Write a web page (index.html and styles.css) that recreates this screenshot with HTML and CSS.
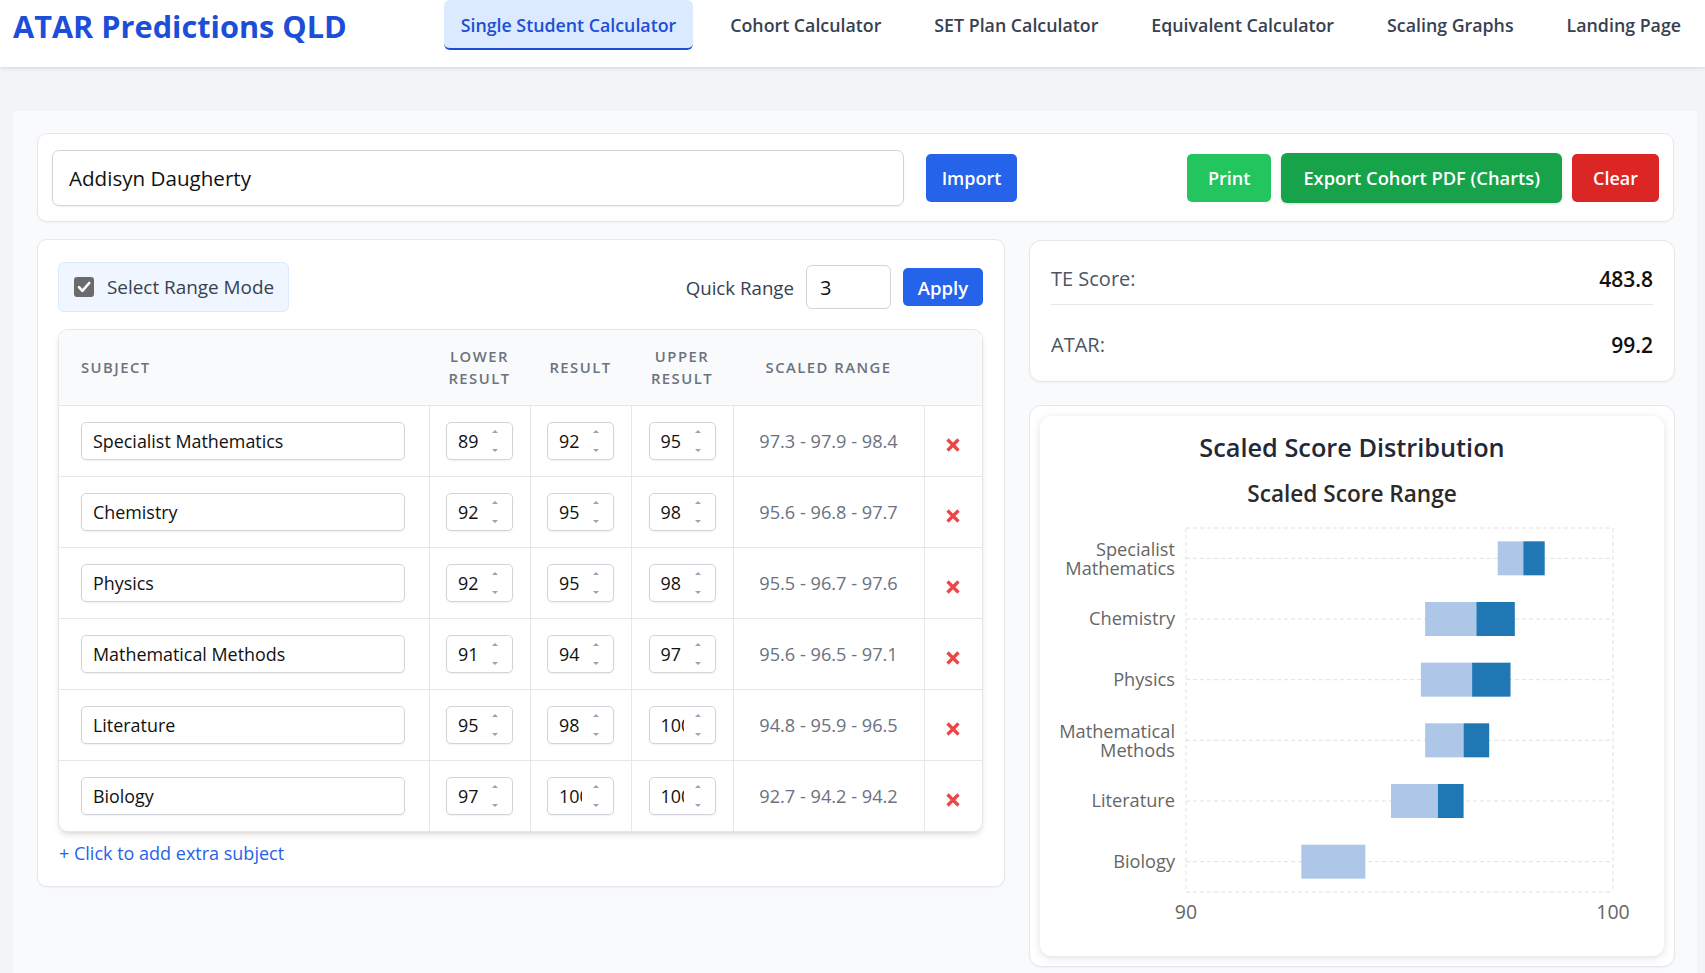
FILE: index.html
```html
<!DOCTYPE html>
<html lang="en">
<head>
<meta charset="utf-8">
<title>ATAR Predictions QLD</title>
<link rel="stylesheet" href="styles.css">
</head>
<body>
<header class="topbar">
  <h1 class="brand">ATAR Predictions QLD</h1>
  <nav class="nav">
    <a class="nav-item active">Single Student Calculator</a>
    <a class="nav-item">Cohort Calculator</a>
    <a class="nav-item">SET Plan Calculator</a>
    <a class="nav-item">Equivalent Calculator</a>
    <a class="nav-item">Scaling Graphs</a>
    <a class="nav-item">Landing Page</a>
  </nav>
</header>

<main class="page">
  <section class="card student-bar">
    <input class="name-input" type="text" value="Addisyn Daugherty">
    <button class="btn btn-blue btn-import">Import</button>
    <div class="actions">
      <button class="btn btn-green">Print</button>
      <button class="btn btn-dkgreen">Export Cohort PDF (Charts)</button>
      <button class="btn btn-red">Clear</button>
    </div>
  </section>

  <div class="layout">
    <section class="card subjects">
      <div class="toolbar">
        <label class="range-mode">
          <span class="check"><svg width="20" height="20" viewBox="0 0 20 20"><path d="M5 10.2l3.4 3.6L15.2 6" fill="none" stroke="#fff" stroke-width="2.6" stroke-linecap="round" stroke-linejoin="round"/></svg></span>
          Select Range Mode
        </label>
        <div class="quick">
          <span class="quick-label">Quick Range</span>
          <input class="quick-input" type="text" value="3">
          <button class="btn btn-blue btn-apply">Apply</button>
        </div>
      </div>

      <div class="table-wrap">
        <table class="subject-table">
          <colgroup>
            <col class="c-subject"><col class="c-num"><col class="c-num"><col class="c-num2"><col class="c-scaled"><col class="c-del">
          </colgroup>
          <thead>
            <tr>
              <th class="th-subject">Subject</th>
              <th>Lower<br>Result</th>
              <th>Result</th>
              <th>Upper<br>Result</th>
              <th>Scaled Range</th>
              <th></th>
            </tr>
          </thead>
          <tbody>
            <tr>
              <td class="td-subject"><input class="subject-input" type="text" value="Specialist Mathematics"></td>
              <td><span class="num-wrap"><input class="num" type="number" value="89"></span></td>
              <td><span class="num-wrap"><input class="num" type="number" value="92"></span></td>
              <td><span class="num-wrap"><input class="num" type="number" value="95"></span></td>
              <td class="scaled">97.3 - 97.9 - 98.4</td>
              <td class="del"><svg width="14" height="14" viewBox="0 0 14 14"><path d="M1.5 1.5L12.5 12.5M12.5 1.5L1.5 12.5" stroke="#ef4444" stroke-width="3.2"/></svg></td>
            </tr>
            <tr>
              <td class="td-subject"><input class="subject-input" type="text" value="Chemistry"></td>
              <td><span class="num-wrap"><input class="num" type="number" value="92"></span></td>
              <td><span class="num-wrap"><input class="num" type="number" value="95"></span></td>
              <td><span class="num-wrap"><input class="num" type="number" value="98"></span></td>
              <td class="scaled">95.6 - 96.8 - 97.7</td>
              <td class="del"><svg width="14" height="14" viewBox="0 0 14 14"><path d="M1.5 1.5L12.5 12.5M12.5 1.5L1.5 12.5" stroke="#ef4444" stroke-width="3.2"/></svg></td>
            </tr>
            <tr>
              <td class="td-subject"><input class="subject-input" type="text" value="Physics"></td>
              <td><span class="num-wrap"><input class="num" type="number" value="92"></span></td>
              <td><span class="num-wrap"><input class="num" type="number" value="95"></span></td>
              <td><span class="num-wrap"><input class="num" type="number" value="98"></span></td>
              <td class="scaled">95.5 - 96.7 - 97.6</td>
              <td class="del"><svg width="14" height="14" viewBox="0 0 14 14"><path d="M1.5 1.5L12.5 12.5M12.5 1.5L1.5 12.5" stroke="#ef4444" stroke-width="3.2"/></svg></td>
            </tr>
            <tr>
              <td class="td-subject"><input class="subject-input" type="text" value="Mathematical Methods"></td>
              <td><span class="num-wrap"><input class="num" type="number" value="91"></span></td>
              <td><span class="num-wrap"><input class="num" type="number" value="94"></span></td>
              <td><span class="num-wrap"><input class="num" type="number" value="97"></span></td>
              <td class="scaled">95.6 - 96.5 - 97.1</td>
              <td class="del"><svg width="14" height="14" viewBox="0 0 14 14"><path d="M1.5 1.5L12.5 12.5M12.5 1.5L1.5 12.5" stroke="#ef4444" stroke-width="3.2"/></svg></td>
            </tr>
            <tr>
              <td class="td-subject"><input class="subject-input" type="text" value="Literature"></td>
              <td><span class="num-wrap"><input class="num" type="number" value="95"></span></td>
              <td><span class="num-wrap"><input class="num" type="number" value="98"></span></td>
              <td><span class="num-wrap"><input class="num" type="number" value="100"></span></td>
              <td class="scaled">94.8 - 95.9 - 96.5</td>
              <td class="del"><svg width="14" height="14" viewBox="0 0 14 14"><path d="M1.5 1.5L12.5 12.5M12.5 1.5L1.5 12.5" stroke="#ef4444" stroke-width="3.2"/></svg></td>
            </tr>
            <tr>
              <td class="td-subject"><input class="subject-input" type="text" value="Biology"></td>
              <td><span class="num-wrap"><input class="num" type="number" value="97"></span></td>
              <td><span class="num-wrap"><input class="num" type="number" value="100"></span></td>
              <td><span class="num-wrap"><input class="num" type="number" value="100"></span></td>
              <td class="scaled">92.7 - 94.2 - 94.2</td>
              <td class="del"><svg width="14" height="14" viewBox="0 0 14 14"><path d="M1.5 1.5L12.5 12.5M12.5 1.5L1.5 12.5" stroke="#ef4444" stroke-width="3.2"/></svg></td>
            </tr>
          </tbody>
        </table>
      </div>
      <a class="add-link">+ Click to add extra subject</a>
    </section>

    <aside class="side">
      <section class="card totals">
        <div class="total-row first">
          <span class="total-label">TE Score:</span>
          <span class="total-value">483.8</span>
        </div>
        <div class="total-row second">
          <span class="total-label">ATAR:</span>
          <span class="total-value">99.2</span>
        </div>
      </section>

      <section class="card chart-card">
        <div class="chart-inner">
          <h3 class="chart-title">Scaled Score Distribution</h3>
          <svg class="chart" width="624" height="492" viewBox="0 0 624 492">
            <text class="chart-sub" x="312" y="30" dy=".35em" text-anchor="middle">Scaled Score Range</text>
            <g class="grid">
              <line x1="146" y1="64" x2="573" y2="64"/>
              <line x1="146" y1="94.33" x2="573" y2="94.33"/>
              <line x1="146" y1="155" x2="573" y2="155"/>
              <line x1="146" y1="215.67" x2="573" y2="215.67"/>
              <line x1="146" y1="276.33" x2="573" y2="276.33"/>
              <line x1="146" y1="337" x2="573" y2="337"/>
              <line x1="146" y1="397.67" x2="573" y2="397.67"/>
              <line x1="146" y1="428" x2="573" y2="428"/>
              <line x1="146" y1="64" x2="146" y2="428"/>
              <line x1="573" y1="64" x2="573" y2="428"/>
            </g>
            <g class="bars-light">
              <rect x="457.7" y="77.33" width="25.6" height="34"/>
              <rect x="385.1" y="138" width="51.3" height="34"/>
              <rect x="380.9" y="198.67" width="51.2" height="34"/>
              <rect x="385.1" y="259.33" width="38.5" height="34"/>
              <rect x="351" y="320" width="46.9" height="34"/>
              <rect x="261.3" y="380.67" width="64" height="34"/>
            </g>
            <g class="bars-dark">
              <rect x="483.3" y="77.33" width="21.4" height="34"/>
              <rect x="436.4" y="138" width="38.4" height="34"/>
              <rect x="432.1" y="198.67" width="38.4" height="34"/>
              <rect x="423.6" y="259.33" width="25.6" height="34"/>
              <rect x="397.9" y="320" width="25.7" height="34"/>
            </g>
            <g class="ylabels">
              <text x="135" y="85.8" dy=".35em" text-anchor="end">Specialist</text>
              <text x="135" y="105" dy=".35em" text-anchor="end">Mathematics</text>
              <text x="135" y="155" dy=".35em" text-anchor="end">Chemistry</text>
              <text x="135" y="215.67" dy=".35em" text-anchor="end">Physics</text>
              <text x="135" y="267.5" dy=".35em" text-anchor="end">Mathematical</text>
              <text x="135" y="286.8" dy=".35em" text-anchor="end">Methods</text>
              <text x="135" y="337" dy=".35em" text-anchor="end">Literature</text>
              <text x="135" y="397.67" dy=".35em" text-anchor="end">Biology</text>
            </g>
            <g class="xlabels">
              <text x="146" y="448" dy=".35em" text-anchor="middle">90</text>
              <text x="573" y="448" dy=".35em" text-anchor="middle">100</text>
            </g>
          </svg>
        </div>
      </section>
    </aside>
  </div>
</main>
</body>
</html>
```

FILE: styles.css
```css
* { box-sizing: border-box; }

html, body {
  margin: 0;
  padding: 0;
}

body {
  background: #f3f4f6;
  font-family: "Open Sans", "Noto Sans", "Liberation Sans", sans-serif;
  color: #111827;
  min-height: 973px;
}

/* ---------- header ---------- */
.topbar {
  height: 67px;
  background: #ffffff;
  display: flex;
  justify-content: space-between;
  align-items: flex-start;
  padding: 0 8px 0 13px;
  box-shadow: 0 1px 3px rgba(0, 0, 0, 0.08), 0 2px 4px rgba(0, 0, 0, 0.04);
  position: relative;
  z-index: 1;
}

.brand {
  margin: 0;
  font-size: 30.7px;
  line-height: 53px;
  font-weight: 700;
  color: #1d4ed8;
}

.nav {
  display: flex;
  gap: 21px;
}

.nav-item {
  height: 50px;
  display: flex;
  align-items: center;
  padding: 0 16px;
  font-size: 17.8px;
  font-weight: 600;
  color: #374151;
  border-radius: 6px;
  white-space: nowrap;
}

.nav-item.active {
  background: #dbeafe;
  color: #1d4ed8;
  border-bottom: 2px solid #1d4ed8;
  padding: 2px 17px 0;
}

/* ---------- page ---------- */
.page {
  margin: 44px 8px 0 13px;
  background: #f9fafb;
  padding: 22px 23px 0 24px;
  min-height: 862px;
}

.card {
  background: #ffffff;
  border: 1px solid #e5e7eb;
  border-radius: 10px;
  box-shadow: 0 1px 2px rgba(0, 0, 0, 0.04);
}

.student-bar {
  height: 89px;
  display: flex;
  align-items: center;
  padding: 0 14px;
}

.name-input {
  width: 852px;
  height: 56px;
  border: 1px solid #d1d5db;
  border-radius: 7px;
  padding: 0 16px;
  font-family: inherit;
  font-size: 20.6px;
  color: #111;
  box-shadow: 0 1px 2px rgba(0, 0, 0, 0.05);
}

.btn {
  border: none;
  border-radius: 5px;
  color: #ffffff;
  font-family: inherit;
  font-weight: 600;
  font-size: 18px;
  height: 48px;
  padding: 0 21px;
  white-space: nowrap;
}

.btn-blue { background: #2563eb; }
.btn-green { background: #22c55e; }
.btn-dkgreen {
  background: #16a34a;
  height: 50px;
  border-radius: 6px;
  padding: 0 22px;
  font-size: 18.3px;
  box-shadow: 0 1px 3px rgba(0, 0, 0, 0.15);
}
.btn-red { background: #dc2626; }

.btn-import {
  margin-left: 22px;
  padding: 0 15px;
  width: 91px;
}

.actions {
  margin-left: auto;
  display: flex;
  align-items: center;
  gap: 10px;
}

/* ---------- layout ---------- */
.layout {
  margin-top: 17px;
  display: grid;
  grid-template-columns: 3fr 2fr;
  gap: 24px;
  align-items: start;
}

.subjects {
  padding: 22px 21px 20px 20px;
}

.toolbar {
  display: flex;
  justify-content: space-between;
  align-items: center;
}

.range-mode {
  width: 231px;
  height: 50px;
  display: flex;
  align-items: center;
  gap: 13px;
  padding-left: 15px;
  background: #eff6ff;
  border: 1px solid #dbeafe;
  border-radius: 6px;
  font-size: 18.9px;
  font-weight: 500;
  color: #374151;
  white-space: nowrap;
}

.check {
  width: 20px;
  height: 20px;
  flex: none;
  background: #6b6b6b;
  border-radius: 3px;
  display: flex;
}

.quick {
  display: flex;
  align-items: center;
  gap: 12px;
}

.quick-label {
  font-size: 18.7px;
  color: #374151;
}

.quick-input {
  width: 85px;
  height: 44px;
  border: 1px solid #d1d5db;
  border-radius: 6px;
  padding: 0 13px;
  font-family: inherit;
  font-size: 20px;
  color: #111;
}

.btn-apply {
  width: 80px;
  height: 38px;
  padding: 0 12px;
  font-size: 18.5px;
}

/* ---------- table ---------- */
.table-wrap {
  margin-top: 17px;
  border: 1px solid #e5e7eb;
  border-radius: 10px;
  overflow: hidden;
  box-shadow: 0 4px 6px -1px rgba(0, 0, 0, 0.1), 0 2px 4px -1px rgba(0, 0, 0, 0.06);
}

.subject-table {
  width: 100%;
  table-layout: fixed;
  border-collapse: collapse;
}

.c-subject { width: 370px; }
.c-num { width: 101px; }
.c-num2 { width: 102px; }
.c-scaled { width: 191px; }
.c-del { width: 58px; }

.subject-table th {
  height: 75px;
  background: #f9fafb;
  font-size: 14.8px;
  font-weight: 600;
  line-height: 22px;
  letter-spacing: 0.1em;
  text-transform: uppercase;
  color: #6b7280;
  text-align: center;
  vertical-align: middle;
  padding: 0;
}

.subject-table th.th-subject {
  text-align: left;
  padding-left: 22px;
}

.subject-table td {
  height: 71px;
  border-top: 1px solid #e5e7eb;
  border-right: 1px solid #e5e7eb;
  text-align: center;
  vertical-align: middle;
  padding: 0;
}

.subject-table td.del {
  border-right: none;
}

.subject-table td.td-subject {
  text-align: left;
  padding-left: 22px;
}

.subject-input {
  width: 324px;
  height: 38px;
  border: 1px solid #d1d5db;
  border-radius: 5px;
  padding: 0 11px;
  font-family: inherit;
  font-size: 17.9px;
  color: #111;
  box-shadow: 0 1px 2px rgba(0, 0, 0, 0.06);
  vertical-align: middle;
}

.num-wrap {
  position: relative;
  display: inline-block;
  vertical-align: middle;
}

.num-wrap::before,
.num-wrap::after {
  content: "";
  position: absolute;
  right: 15px;
  width: 0;
  height: 0;
  border-left: 3px solid transparent;
  border-right: 3px solid transparent;
  pointer-events: none;
}

.num-wrap::before {
  top: 8px;
  border-bottom: 3.5px solid #9ca3af;
}

.num-wrap::after {
  bottom: 8px;
  border-top: 3.5px solid #9ca3af;
}

.num {
  display: block;
  width: 67px;
  height: 38px;
  border: 1px solid #d1d5db;
  border-radius: 5px;
  padding: 0 31px 0 11px;
  font-family: inherit;
  font-size: 17.9px;
  color: #111;
  box-shadow: 0 1px 2px rgba(0, 0, 0, 0.06);
  -moz-appearance: textfield;
}

.num::-webkit-inner-spin-button,
.num::-webkit-outer-spin-button {
  -webkit-appearance: none;
  margin: 0;
}

.scaled {
  font-size: 18.2px;
  color: #6b7280;
}

.del svg {
  display: inline-block;
  vertical-align: middle;
  margin-top: 5px;
}

.add-link {
  display: block;
  margin-top: 8px;
  margin-left: 1px;
  font-size: 18px;
  line-height: 26px;
  color: #2563eb;
}

/* ---------- side ---------- */
.side {
  display: flex;
  flex-direction: column;
  gap: 23px;
  margin-top: 1px;
}

.totals {
  height: 142px;
  border-radius: 12px;
  padding: 0 21px;
}

.total-row {
  display: flex;
  justify-content: space-between;
  align-items: center;
  line-height: 30px;
}

.total-row.first {
  padding: 23px 0 10px;
  border-bottom: 1px solid #e5e7eb;
}

.total-row.second {
  padding-top: 25px;
}

.total-label {
  font-size: 20px;
  color: #4b5563;
}

.total-value {
  font-size: 21px;
  font-weight: 600;
  color: #111;
}

.chart-card {
  height: 562px;
  border-radius: 12px;
  padding: 10px;
}

.chart-inner {
  height: 540px;
  background: #ffffff;
  border-radius: 12px;
  box-shadow: 0 2px 8px rgba(0, 0, 0, 0.12);
}

.chart-title {
  margin: 0;
  padding-top: 14px;
  line-height: 34px;
  font-size: 25.3px;
  font-weight: 600;
  color: #1f2937;
  text-align: center;
}

.chart {
  display: block;
}

.chart-sub {
  font-size: 22.6px;
  font-weight: 600;
  fill: #2b2b2b;
}

.grid line {
  stroke: #e0e0e0;
  stroke-width: 1;
  stroke-dasharray: 4 3;
}

.bars-light rect { fill: #aec7e8; }
.bars-dark rect { fill: #1f77b4; }

.ylabels text {
  font-size: 18.2px;
  fill: #666666;
}

.xlabels text {
  font-size: 19.5px;
  fill: #666666;
}
```
